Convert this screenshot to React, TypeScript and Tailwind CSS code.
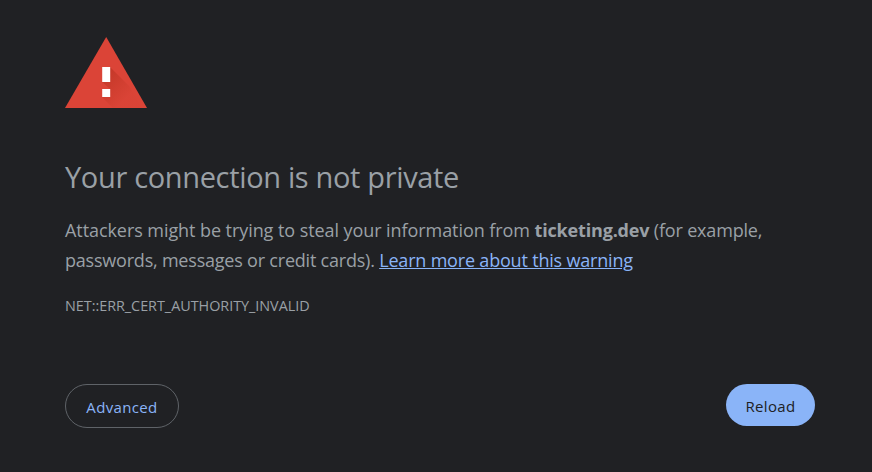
function WarningIcon() {
  return (
    <svg className="block h-[71px] w-[82px]" viewBox="0 0 82 71" aria-hidden="true">
      <defs>
        <linearGradient id="shade" gradientUnits="userSpaceOnUse" x1="40" y1="38" x2="62" y2="60">
          <stop offset="0" stopColor="#a52714" stopOpacity="0.4" />
          <stop offset="1" stopColor="#a52714" stopOpacity="0.02" />
        </linearGradient>
      </defs>
      <path d="M41.2 0L82 71H0Z" fill="#db4437" />
      <path d="M45 30L64.5 49.5L77 71H48L37 60L45 52L37 45Z" fill="url(#shade)" />
      <path d="M37.2 30h8v15h-8zM37.2 52h8v8h-8z" fill="#fff" />
    </svg>
  );
}

export default function App() {
  return (
    <main className="flex h-[472px] w-[872px] flex-col items-start overflow-hidden bg-[#202124] pl-[65px] pr-[57px] pt-[37px] font-['Open_Sans','Noto_Sans',sans-serif] text-[#9aa0a6]">
      <WarningIcon />
      <h1 className="mt-[49px] whitespace-nowrap text-[29px] leading-[40px] tracking-[-0.34px]">
        Your connection is not private
      </h1>
      <div className="mt-[18px] whitespace-nowrap text-[18px] leading-[30px]">
        <p>
          <span className="tracking-[-0.07px]">Attackers might be trying to steal your information from </span>
          <strong className="font-bold tracking-[-0.17px]">ticketing.dev</strong>
          <span className="tracking-[-0.18px]"> (for example,</span>
        </p>
        <p>
          <span className="tracking-[-0.21px]">passwords, messages or credit cards). </span>
          <a href="#" className="tracking-[-0.19px] text-[#8ab4f8] underline">Learn more about this warning</a>
        </p>
      </div>
      <p className="mt-[21px] whitespace-nowrap text-[14.4px] leading-[20px] tracking-[-0.03px]">NET::ERR_CERT_AUTHORITY_INVALID</p>
      <div className="mt-[68px] flex w-full items-start justify-between text-[15px] tracking-[0.35px]">
        <button className="flex h-[44px] w-[114px] items-center justify-center rounded-full border border-[#5f6368] pt-[3px] text-[#8ab4f8]">Advanced</button>
        <button className="flex h-[42px] w-[89px] items-center justify-center rounded-full bg-[#8ab4f8] pt-[3px] text-[#202124]">Reload</button>
      </div>
    </main>
  );
}
